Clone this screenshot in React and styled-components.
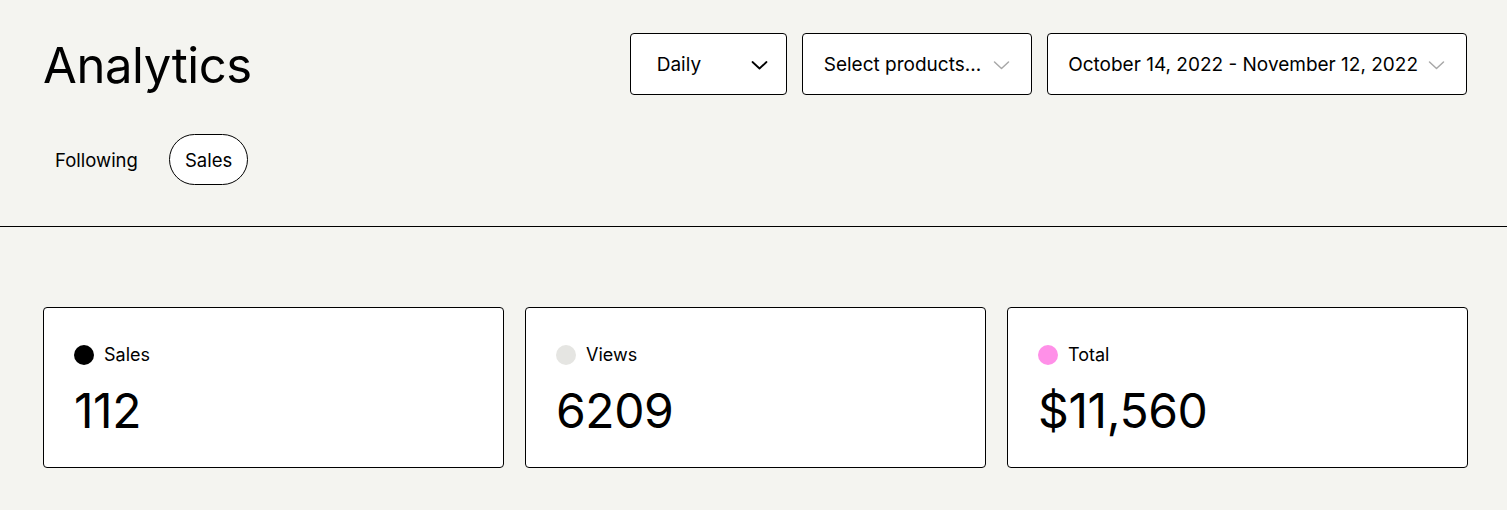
import React from 'react';
import styled, { createGlobalStyle } from 'styled-components';

const GlobalStyle = createGlobalStyle`
  * { box-sizing: border-box; }
  body {
    margin: 0;
    background: #f4f4f0;
    color: #000;
    font-family: Inter, "Liberation Sans", sans-serif;
  }
`;

const Page = styled.div`
  min-height: 510px;
  background: #f4f4f0;
`;

const Header = styled.header`
  display: flex;
  flex-direction: column;
  gap: 39px;
  padding: 33px 40px 41px 43px;
  border-bottom: 1px solid #000;
`;

const TopRow = styled.div`
  display: flex;
  align-items: center;
  justify-content: space-between;
  height: 62px;
`;

const Title = styled.h1`
  margin: 0;
  font-size: 49px;
  font-weight: 400;
  line-height: 62px;
  letter-spacing: -0.4px;
  transform: translateY(2px);
`;

const Controls = styled.div`
  display: flex;
  gap: 15px;
`;

const Select = styled.button`
  display: flex;
  align-items: center;
  justify-content: space-between;
  gap: ${p => p.$gap || 11}px;
  height: 62px;
  width: ${p => p.$width || 'auto'};
  padding: 1px ${p => p.$padRight || 21}px 0 ${p => p.$padLeft || 20}px;
  background: #fff;
  border: 1px solid #000;
  border-radius: 4px;
  font-family: inherit;
  font-size: 19px;
  color: #000;
  cursor: pointer;
`;

const Tabs = styled.nav`
  display: flex;
  gap: 15px;
  margin-left: -4px;
`;

const Tab = styled.button`
  height: 51px;
  padding: 1px 15px 0;
  border-radius: 999px;
  border: 1px solid ${p => (p.$active ? '#000' : 'transparent')};
  background: ${p => (p.$active ? '#fff' : 'transparent')};
  font-family: inherit;
  font-size: 18.5px;
  color: #000;
  cursor: pointer;
`;

const Main = styled.main`
  padding: 80px 39px 41px 43px;
`;

const Cards = styled.div`
  display: grid;
  grid-template-columns: repeat(3, 1fr);
  gap: 21px;
`;

const Card = styled.section`
  display: flex;
  flex-direction: column;
  gap: 17px;
  height: 161px;
  padding: 37px 30px 0;
  background: #fff;
  border: 1px solid #000;
  border-radius: 4px;
`;

const Label = styled.div`
  display: flex;
  align-items: center;
  gap: 10px;
  font-size: 18px;
  line-height: 20px;
`;

const Dot = styled.span`
  width: 20px;
  height: 20px;
  border-radius: 50%;
  background: ${p => p.$color};
`;

const Value = styled.div`
  font-size: 48px;
  line-height: 58px;
  letter-spacing: -0.4px;
`;

const Chevron = ({ muted }) => (
  <svg width="17" height="10" viewBox="0 0 17 10" fill="none" stroke={muted ? '#a8a8a8' : '#000'} strokeWidth={muted ? 1.5 : 1.8} strokeLinecap="round" strokeLinejoin="round">
    <path d="M1.5 2 L8.5 8.5 L15.5 2" />
  </svg>
);

const stats = [
  { label: 'Sales', value: '112', color: '#000' },
  { label: 'Views', value: '6209', color: '#e5e5e2' },
  { label: 'Total', value: '$11,560', color: '#ff90e8' },
];

export default function App() {
  return (
    <Page>
      <GlobalStyle />
      <Header>
        <TopRow>
          <Title>Analytics</Title>
          <Controls>
            <Select $width="157px" $padLeft={26} $padRight={18}>
              Daily <Chevron />
            </Select>
            <Select $padLeft={21} $gap={12}>
              Select products... <Chevron muted />
            </Select>
            <Select $gap={10}>
              October 14, 2022 - November 12, 2022 <Chevron muted />
            </Select>
          </Controls>
        </TopRow>
        <Tabs>
          <Tab>Following</Tab>
          <Tab $active>Sales</Tab>
        </Tabs>
      </Header>
      <Main>
        <Cards>
          {stats.map(s => (
            <Card key={s.label}>
              <Label>
                <Dot $color={s.color} />
                {s.label}
              </Label>
              <Value>{s.value}</Value>
            </Card>
          ))}
        </Cards>
      </Main>
    </Page>
  );
}
